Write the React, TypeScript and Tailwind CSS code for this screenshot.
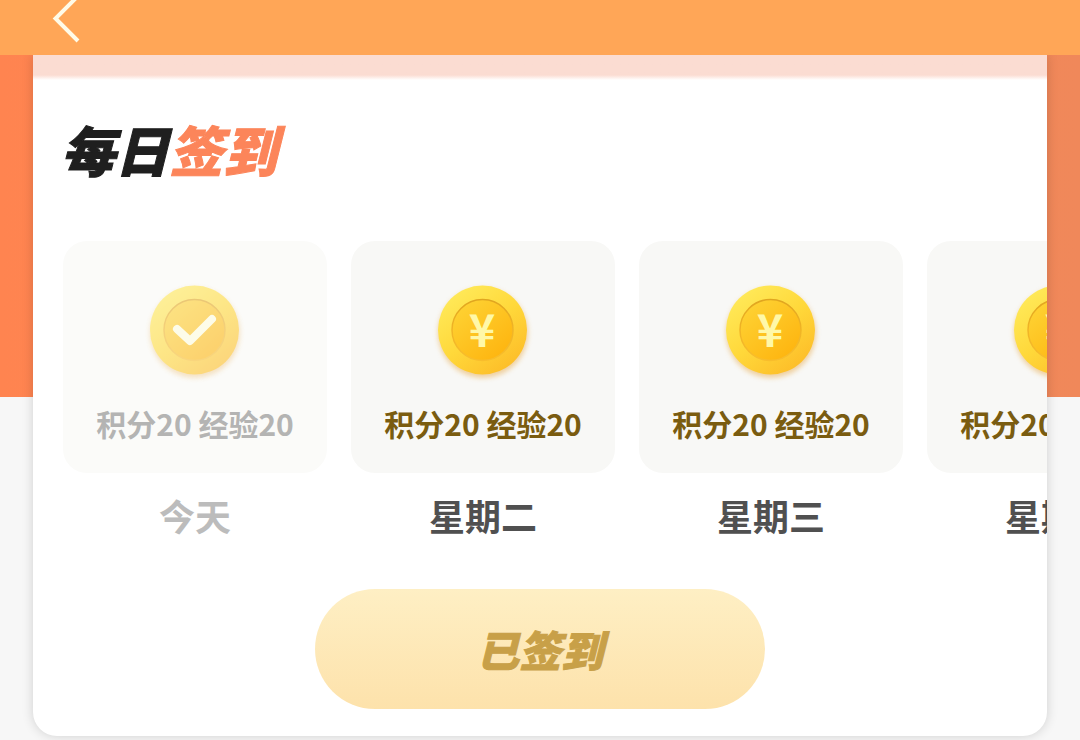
interface Day {
  label: string;
  points: number;
  exp: number;
  signed: boolean;
}

// Sign-in rewards of the week
const days: Day[] = [
  { label: "今天", points: 20, exp: 20, signed: true },
  { label: "星期二", points: 20, exp: 20, signed: false },
  { label: "星期三", points: 20, exp: 20, signed: false },
  { label: "星期四", points: 20, exp: 20, signed: false },
];

// Gold coin, with a tick once the day has been signed
function Coin({ signed }: { signed: boolean }) {
  return (
    <svg
      viewBox="0 0 104 104"
      className={`h-[104px] w-[104px] ${signed ? "opacity-60" : ""}`}
      aria-hidden="true"
    >
      <defs>
        <linearGradient id="coinRim" x1="0.15" y1="0.1" x2="0.8" y2="0.95">
          <stop offset="0" stopColor="#ffe958" />
          <stop offset="0.5" stopColor="#ffd83a" />
          <stop offset="1" stopColor="#fdbd28" />
        </linearGradient>
        <linearGradient id="coinFace" x1="0.1" y1="0.1" x2="0.8" y2="0.9">
          <stop offset="0" stopColor="#fed233" />
          <stop offset="1" stopColor="#feb611" />
        </linearGradient>
        <linearGradient id="coinEdge" x1="0" y1="0" x2="0" y2="1">
          <stop offset="0" stopColor="#e0a51f" />
          <stop offset="0.5" stopColor="#f0b426" />
          <stop offset="1" stopColor="#f8bd2c" />
        </linearGradient>
        <filter id="coinShadow" x="-20%" y="-20%" width="140%" height="140%">
          <feGaussianBlur stdDeviation="2.5" />
        </filter>
      </defs>
      <circle
        cx="52"
        cy="54"
        r="45"
        fill="#e9b565"
        opacity="0.6"
        filter="url(#coinShadow)"
      />
      <circle cx="51.500" cy="51" r="44.500" fill="url(#coinRim)" />
      <circle
        cx="51.500"
        cy="51"
        r="30.500"
        fill="url(#coinFace)"
        stroke="url(#coinEdge)"
        strokeWidth="1.500"
      />
      {signed ? (
        <path
          d="M34 50 L47 62 L69 40"
          fill="none"
          stroke="#fffde0"
          strokeWidth="8"
          strokeLinecap="round"
          strokeLinejoin="round"
        />
      ) : (
        <text
          x="51"
          y="68"
          textAnchor="middle"
          fill="#fff8a8"
          className="font-['Noto_Sans_CJK_SC',sans-serif] text-[45px] font-bold"
        >
          ¥
        </text>
      )}
    </svg>
  );
}

function DayItem({ day }: { day: Day }) {
  return (
    <li className="w-[264px] shrink-0 text-center">
      <div
        className={`flex h-[232px] flex-col items-center rounded-3xl pt-[38px] ${
          day.signed ? "bg-[#fbfbf9]" : "bg-[#f8f8f6]"
        }`}
      >
        <Coin signed={day.signed} />
        <p
          className={`mt-[18px] text-[30px] leading-11 font-bold whitespace-nowrap ${
            day.signed ? "text-[#b4b4b3]" : "text-[#7a5c10]"
          }`}
        >
          积分{day.points} 经验{day.exp}
        </p>
      </div>
      <p
        className={`mt-4 text-4xl leading-[52px] font-bold ${
          day.signed ? "text-[#bcbcbc]" : "text-[#505050]"
        }`}
      >
        {day.label}
      </p>
    </li>
  );
}

export default function App() {
  return (
    <div className="min-h-screen overflow-hidden bg-[#f7f7f7] font-['Noto_Sans_CJK_SC',sans-serif]">
      <header className="relative z-10 h-[55px] bg-[#ffa657] pl-[50px]">
        <button type="button" aria-label="返回" className="block h-11 w-8">
          <svg
            viewBox="0 0 32 44"
            className="h-11 w-8"
            fill="none"
            stroke="#fffbe8"
            strokeWidth="4"
          >
            <path d="M28 -4 L5.500 18.500 L28 41" />
          </svg>
        </button>
      </header>

      <main className="bg-[linear-gradient(to_right,#ff8450,#f0885a)] bg-[length:100%_342px] bg-no-repeat px-[33px] pb-1">
        <section className="overflow-hidden rounded-b-3xl bg-white pb-[27px] shadow-[0_0_12px_rgba(0,0,0,0.16)]">
          <div className="h-[25px] bg-linear-to-b from-[#fbdcd2] from-80% to-white" />

          <h1 className="mt-[30px] px-7 text-[54px] leading-[78px] font-black text-[#1f1f1f] italic [-webkit-text-stroke:1px_currentColor]">
            每日<span className="text-[#fc855a]">签到</span>
          </h1>

          <ul className="mt-[53px] flex gap-6 overflow-hidden pb-4 pl-[30px]">
            {days.map((day) => (
              <DayItem key={day.label} day={day} />
            ))}
          </ul>

          <button
            type="button"
            className="mx-auto mt-8 block h-[120px] w-[450px] rounded-full bg-linear-to-b from-[#feefc4] to-[#fde2ab] text-[42px] leading-[60px] font-black text-[#c8a048] italic [-webkit-text-stroke:1px_currentColor]"
          >
            已签到
          </button>
        </section>
      </main>
    </div>
  );
}
